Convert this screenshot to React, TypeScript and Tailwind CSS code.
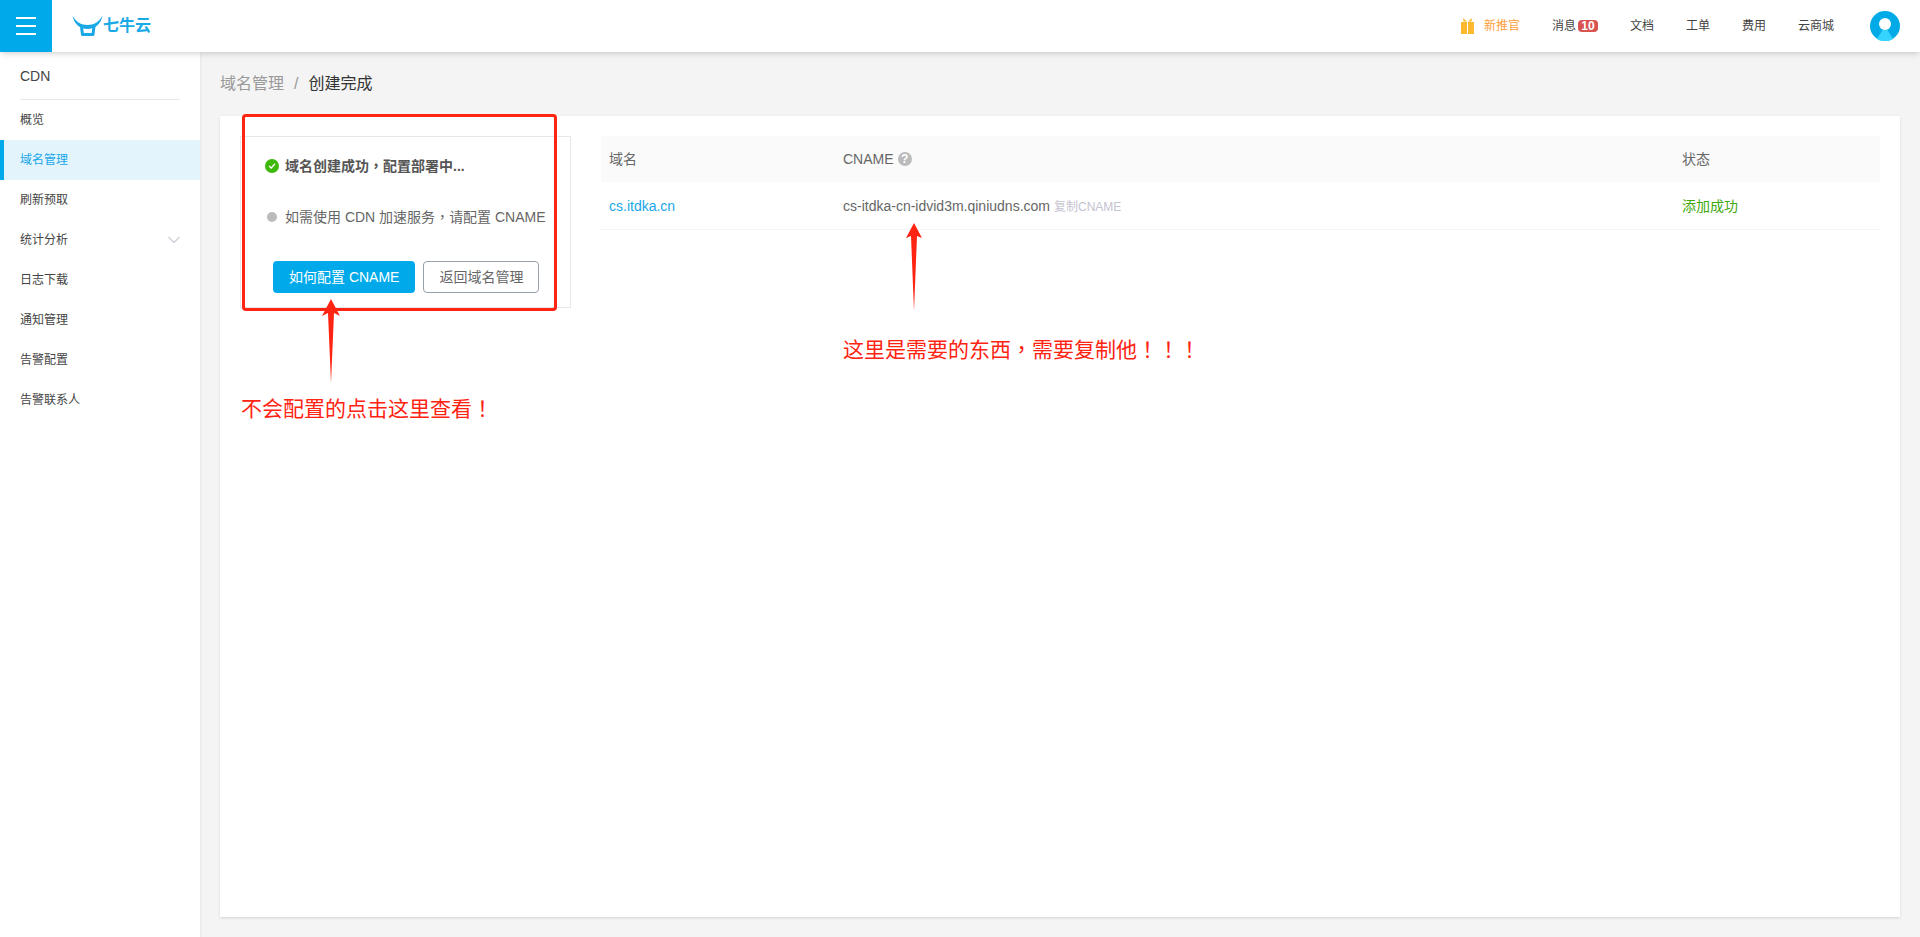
import React from 'react';
import { ChevronDown } from 'lucide-react';

const menuItems = ['概览', '域名管理', '刷新预取', '统计分析', '日志下载', '通知管理', '告警配置', '告警联系人'];
const navLinks = ['文档', '工单', '费用', '云商城'];

// the TC cut of the font centres full-width punctuation in its cell
const Punct = ({ children }: { children: React.ReactNode }) => (
  <span className="[font-family:'Noto_Sans_CJK_TC',sans-serif]">{children}</span>
);

const Logo = () => (
  <div className="ml-5 flex items-center text-[#1aa9e6]">
    <svg width="31" height="22" viewBox="0 0 31 22" fill="none">
      <path d="M0.5 0.5 C4 7 9 10 15.5 10 C22 10 27 7 30.5 0.5 C29 9 23 14 15.5 14 C8 14 2 9 0.5 0.5 Z" fill="currentColor" />
      <path d="M9.5 12 L10.5 19.5 H21 L22 11" stroke="currentColor" strokeWidth="3" strokeLinejoin="round" />
    </svg>
    <span className="text-base leading-none font-bold">七牛云</span>
  </div>
);

const GiftIcon = () => (
  <svg width="13" height="16" viewBox="0 0 13 16" fill="#fdb92e">
    <path d="M0 4 H6 V16 H0 Z M7 4 H13 V16 H7 Z" />
    <path d="M2 0 L6 3.5 H2.5 Z M11 0 L7 3.5 H10.5 Z" />
  </svg>
);

const Avatar = () => (
  <svg width="30" height="30" viewBox="0 0 30 30">
    <circle cx="15" cy="15" r="15" fill="#00aae7" />
    <path d="M15 15 L23 28 A15 15 0 0 1 7 28 Z" fill="#35d4ff" />
    <circle cx="15" cy="13" r="6" fill="#ffffff" />
  </svg>
);

const Header = () => (
  <header className="relative z-10 flex h-13 items-center bg-white pr-5 shadow-md">
    <div className="flex h-13 w-13 flex-col items-center justify-center gap-1.5 bg-[#00aaea]">
      <span className="h-0.5 w-5 bg-white" />
      <span className="h-0.5 w-5 bg-white" />
      <span className="h-0.5 w-5 bg-white" />
    </div>
    <Logo />
    <div className="ml-auto flex items-center gap-8 text-xs text-[#444444]">
      <div className="flex items-center gap-2.5 text-[#ff9d3a]">
        <GiftIcon />
        <span>新推官</span>
      </div>
      <div className="flex items-center gap-0.5">
        <span>消息</span>
        <span className="w-5 rounded-sm bg-[#d9534f] text-center text-xs leading-none font-bold text-white">10</span>
      </div>
      {navLinks.map((link) => (
        <span key={link}>{link}</span>
      ))}
      <div className="ml-1">
        <Avatar />
      </div>
    </div>
  </header>
);

const Sidebar = () => (
  <aside className="w-50 shrink-0 bg-white shadow-sm">
    <div className="mx-5 flex h-12 items-center border-b border-gray-200 text-sm text-[#444444]">CDN</div>
    <ul className="text-xs text-[#444444]">
      {menuItems.map((item) => (
        <li
          key={item}
          className={
            item === '域名管理'
              ? 'flex h-10 items-center border-l-4 border-[#00aaea] bg-[#e3f4fc] pl-4 text-[#1aa7e8]'
              : 'flex h-10 items-center justify-between pr-5 pl-5'
          }
        >
          {item}
          {item === '统计分析' && <ChevronDown className="-mr-1 h-5 w-5 text-gray-300" />}
        </li>
      ))}
    </ul>
  </aside>
);

const StatusBox = () => (
  <div className="flex h-43 w-[331px] shrink-0 flex-col border border-gray-200 text-sm">
    <div className="mt-4.5 flex items-center gap-1.5 pl-6 font-bold text-[#555555]">
      <span className="flex h-3.5 w-3.5 items-center justify-center rounded-full bg-[#3fb80c]">
        <svg width="8" height="8" viewBox="0 0 8 8" fill="none" stroke="white" strokeWidth="1.3">
          <path d="M1 4 L3.2 6 L7 1.8" />
        </svg>
      </span>
      <span>
        域名创建成功<Punct>，</Punct>配置部署中...
      </span>
    </div>
    <div className="mt-7.5 flex items-center gap-2 pl-6 text-[#666666]">
      <span className="mx-0.5 h-2.5 w-2.5 rounded-full bg-[#bbbbbb]" />
      <span className="-ml-0.5">
        如需使用 CDN 加速服务<Punct>，</Punct>请配置 CNAME
      </span>
    </div>
    <div className="mt-8.5 flex gap-2 pl-8">
      <button className="h-8 rounded-sm bg-[#00aaea] px-4 text-white">如何配置 CNAME</button>
      <button className="h-8 w-29 rounded-sm border border-gray-400 text-[#666666]">返回域名管理</button>
    </div>
  </div>
);

const DomainTable = () => (
  <div className="flex-1 text-sm text-[#666666]">
    <div className="grid h-11.5 grid-cols-[234px_1fr_190px] items-center bg-[#fafafa] px-2">
      <span>域名</span>
      <span className="flex items-center gap-1">
        CNAME
        <span className="flex h-3.5 w-3.5 items-center justify-center rounded-full bg-[#bbbbbb] text-xs font-bold text-white">
          ?
        </span>
      </span>
      <span>状态</span>
    </div>
    <div className="grid h-12 grid-cols-[234px_1fr_190px] items-center border-b border-gray-100 px-2">
      <span className="text-[#1aa7e8]">cs.itdka.cn</span>
      <span className="flex items-baseline gap-1">
        cs-itdka-cn-idvid3m.qiniudns.com
        <span className="text-xs text-[#c4c4d0]">复制CNAME</span>
      </span>
      <span className="text-[#3fa80c]">添加成功</span>
    </div>
  </div>
);

const Annotations = () => (
  <>
    <div className="absolute top-[114px] left-[242px] h-[197px] w-[315px] rounded-sm border-3 border-[#ff2312]" />
    <svg className="absolute top-[299px] left-[321px]" width="20" height="84" viewBox="0 0 20 84" fill="#ff2312">
      <path d="M10 0 L19 17 L13 14 L10 84 L7 14 L1 17 Z" />
    </svg>
    <svg className="absolute top-[223px] left-[904px]" width="20" height="88" viewBox="0 0 20 88" fill="#ff2312">
      <path d="M10 0 L18 15 L13 13 L10 88 L7 13 L2 15 Z" />
    </svg>
    <span className="absolute top-[393px] left-[241px] text-[21px] leading-7 text-[#ff2312]">
      不会配置的点击这里查看<Punct>！</Punct>
    </span>
    <span className="absolute top-[334px] left-[843px] text-[21px] leading-7 text-[#ff2312]">
      这里是需要的东西<Punct>，</Punct>需要复制他<Punct>！！！</Punct>
    </span>
  </>
);

export default function App() {
  return (
    <div className="relative flex min-h-screen flex-col bg-[#f4f4f4] [font-family:'Liberation_Sans','Noto_Sans_CJK_SC',sans-serif]">
      <Header />
      <div className="flex flex-1">
        <Sidebar />
        <main className="flex flex-1 flex-col px-5 pb-5">
          <div className="flex h-16 items-center gap-2.5 text-base">
            <span className="text-[#999999]">域名管理</span>
            <span className="text-[#999999]">/</span>
            <span className="text-[#333333]">创建完成</span>
          </div>
          <div className="flex flex-1 items-start gap-7.5 bg-white p-5 shadow-sm">
            <StatusBox />
            <DomainTable />
          </div>
        </main>
      </div>
      <Annotations />
    </div>
  );
}
